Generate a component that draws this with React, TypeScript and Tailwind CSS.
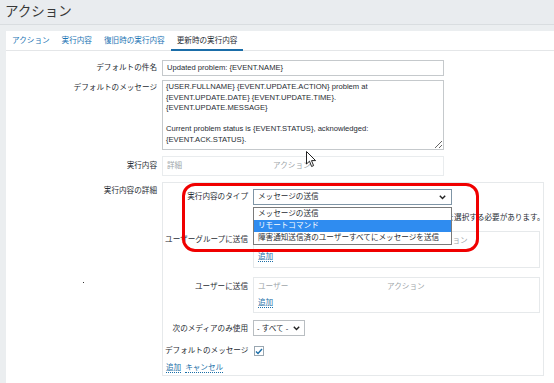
import React from "react";

const font = "font-['Liberation_Sans','Noto_Sans_CJK_JP',sans-serif]";

const Chevron = () => (
  <svg width="7" height="5" viewBox="0 0 7 5" className="shrink-0">
    <path d="M0.8 0.8 L3.5 3.6 L6.2 0.8" fill="none" stroke="#222" strokeWidth="1.4" />
  </svg>
);

const Label = ({ children, className = "" }: { children: React.ReactNode; className?: string }) => (
  <div className={`w-[151px] shrink-0 text-right text-[#1f2c33] ${className}`}>{children}</div>
);

const SubLabel = ({ children, className = "" }: { children: React.ReactNode; className?: string }) => (
  <div className={`w-[83px] shrink-0 text-right whitespace-nowrap text-[#1f2c33] ${className}`}>{children}</div>
);

const Link = ({ children }: { children: React.ReactNode }) => (
  <span className="text-[#1b6fa8] border-b border-dotted border-[#1b6fa8] leading-[9px]">{children}</span>
);

const App = () => {
  return (
    <div className={`relative w-[554px] h-[383px] overflow-hidden bg-[#ebeef0] text-[7.6px] ${font}`}>
      {/* header */}
      <div className="h-[25px] bg-[#e9ecef] border-b border-[#d9dde0] flex items-center pl-[5px]">
        <span className="text-[13.5px] text-[#383838] leading-none">アクション</span>
      </div>

      <div className="ml-[6px] mt-[6px] bg-white h-[400px]">
        {/* tabs */}
        <div className="h-[20px] border-b border-[#e4e6e8] flex items-stretch">
          {["アクション", "実行内容", "復旧時の実行内容"].map((t) => (
            <div key={t} className="px-[6px] flex items-center text-[#1b74b4]">{t}</div>
          ))}
          <div className="px-[6px] flex items-center text-[#1f2c33] border-b-2 border-[#1a6da8] mb-[-1px] pt-[2px]">更新時の実行内容</div>
        </div>

        {/* form */}
        <div className="pt-[9px] flex flex-col">
          {/* subject */}
          <div className="flex items-center gap-[5px]">
            <Label>デフォルトの件名</Label>
            <div className="w-[282px] h-[16px] border border-[#c5c9cc] flex items-center pl-[4px] text-[#1f2c33]">
              Updated problem: {"{EVENT.NAME}"}
            </div>
          </div>

          {/* message */}
          <div className="flex items-start gap-[5px] mt-[4px]">
            <Label className="pt-[2px]">デフォルトのメッセージ</Label>
            <textarea
              readOnly
              className={`w-[282px] h-[70px] border border-[#c5c9cc] px-[3px] pt-[1px] text-[7.6px] leading-[10.6px] text-[#1f2c33] outline-none ${font}`}
              defaultValue={
                "{USER.FULLNAME} {EVENT.UPDATE.ACTION} problem at\n{EVENT.UPDATE.DATE} {EVENT.UPDATE.TIME}.\n{EVENT.UPDATE.MESSAGE}\n\nCurrent problem status is {EVENT.STATUS}, acknowledged:\n{EVENT.ACK.STATUS}."
              }
            />
          </div>

          {/* operations */}
          <div className="flex items-center gap-[5px] mt-[6px]">
            <Label>実行内容</Label>
            <div className="w-[282px] h-[20px] border border-[#e9ecee] flex items-center pl-[4px] text-[#a0a6aa]">
              <span className="w-[106px]">詳細</span>
              <span>アクション</span>
            </div>
          </div>

          {/* operation details */}
          <div className="flex items-start gap-[5px] mt-[6px]">
            <Label className="pt-[3px]">実行内容の詳細</Label>
            <div className="w-[382px] h-[194px] border border-[#e6e9eb] pl-[2px] pt-[6px] flex flex-col">
              <div className="flex items-center gap-[5px]">
                <SubLabel>実行内容のタイプ</SubLabel>
                <div className="w-[199px] h-[16px] border border-[#7f95a6] flex items-center justify-between pl-[4px] pr-[5px] text-[#1f2c33]">
                  <span>メッセージの送信</span>
                  <Chevron />
                </div>
              </div>

              <div className="flex gap-[5px] mt-[7px]">
                <div className="w-[83px] shrink-0" />
                <div className="text-[#1f2c33] whitespace-nowrap pl-[23px]">少なくとも1つのユーザーまたはユーザーグループを選択する必要があります。</div>
              </div>

              <div className="flex items-start gap-[5px] mt-[8px]">
                <SubLabel className="pt-[3px]">ユーザーグループに送信</SubLabel>
                <div className="w-[287px] h-[37px] border border-[#e6e9eb] pl-[4px] pt-[3px] flex flex-col">
                  <div className="flex text-[#a0a6aa]">
                    <span className="w-[172px]">ユーザーグループ</span>
                    <span>アクション</span>
                  </div>
                  <div className="mt-[4px]"><Link>追加</Link></div>
                </div>
              </div>

              <div className="flex items-start gap-[5px] mt-[9px]">
                <SubLabel className="pt-[4px]">ユーザーに送信</SubLabel>
                <div className="w-[287px] h-[36px] border border-[#e6e9eb] pl-[4px] pt-[3px] flex flex-col">
                  <div className="flex text-[#a0a6aa]">
                    <span className="w-[129px]">ユーザー</span>
                    <span>アクション</span>
                  </div>
                  <div className="mt-[4px]"><Link>追加</Link></div>
                </div>
              </div>

              <div className="flex items-center gap-[5px] mt-[7px]">
                <SubLabel>次のメディアのみ使用</SubLabel>
                <div className="w-[52px] h-[16px] border border-[#b9bec2] flex items-center justify-between pl-[3px] pr-[4px] text-[#1f2c33]">
                  <span>- すべて -</span>
                  <Chevron />
                </div>
              </div>

              <div className="flex items-center gap-[6px] mt-[9px]">
                <SubLabel>デフォルトのメッセージ</SubLabel>
                <div className="w-[10px] h-[10px] border border-[#9aa7b1] flex items-center justify-center bg-white">
                  <svg width="8" height="7" viewBox="0 0 8 7">
                    <path d="M1 3.5 L3 5.5 L7 1" fill="none" stroke="#1a6da8" strokeWidth="1.4" />
                  </svg>
                </div>
              </div>

              <div className="flex gap-[4px] mt-[6px] pl-[1px]">
                <Link>追加</Link>
                <Link>キャンセル</Link>
              </div>
            </div>
          </div>
        </div>
      </div>

      {/* open dropdown list */}
      <div className="absolute left-[253px] top-[207px] w-[199px] border border-[#7a7a7a] bg-white flex flex-col text-[#1f2c33]">
        <div className="h-[12px] flex items-center pl-[4px]">メッセージの送信</div>
        <div className="h-[12px] flex items-center pl-[4px] bg-[#2f8cf0] text-white">リモートコマンド</div>
        <div className="h-[12px] flex items-center pl-[4px]">障害通知送信済のユーザーすべてにメッセージを送信</div>
      </div>

      {/* red highlight */}
      <div className="absolute left-[182px] top-[183px] w-[297px] h-[69px] border-[3px] border-[#f00000] rounded-[13px]" />

      {/* mouse cursor */}
      <svg className="absolute left-[306px] top-[151px]" width="11" height="17" viewBox="0 0 11 17">
        <path d="M0.5 0.5 L0.5 13 L3.5 10.2 L5.6 15.5 L7.6 14.6 L5.5 9.6 L9.6 9.6 Z" fill="#fff" stroke="#222" strokeWidth="1" />
      </svg>

      {/* stray dot */}
      <div className="absolute left-[83px] top-[282px] w-[1px] h-[1px] bg-[#333]" />
    </div>
  );
};

export default App;
